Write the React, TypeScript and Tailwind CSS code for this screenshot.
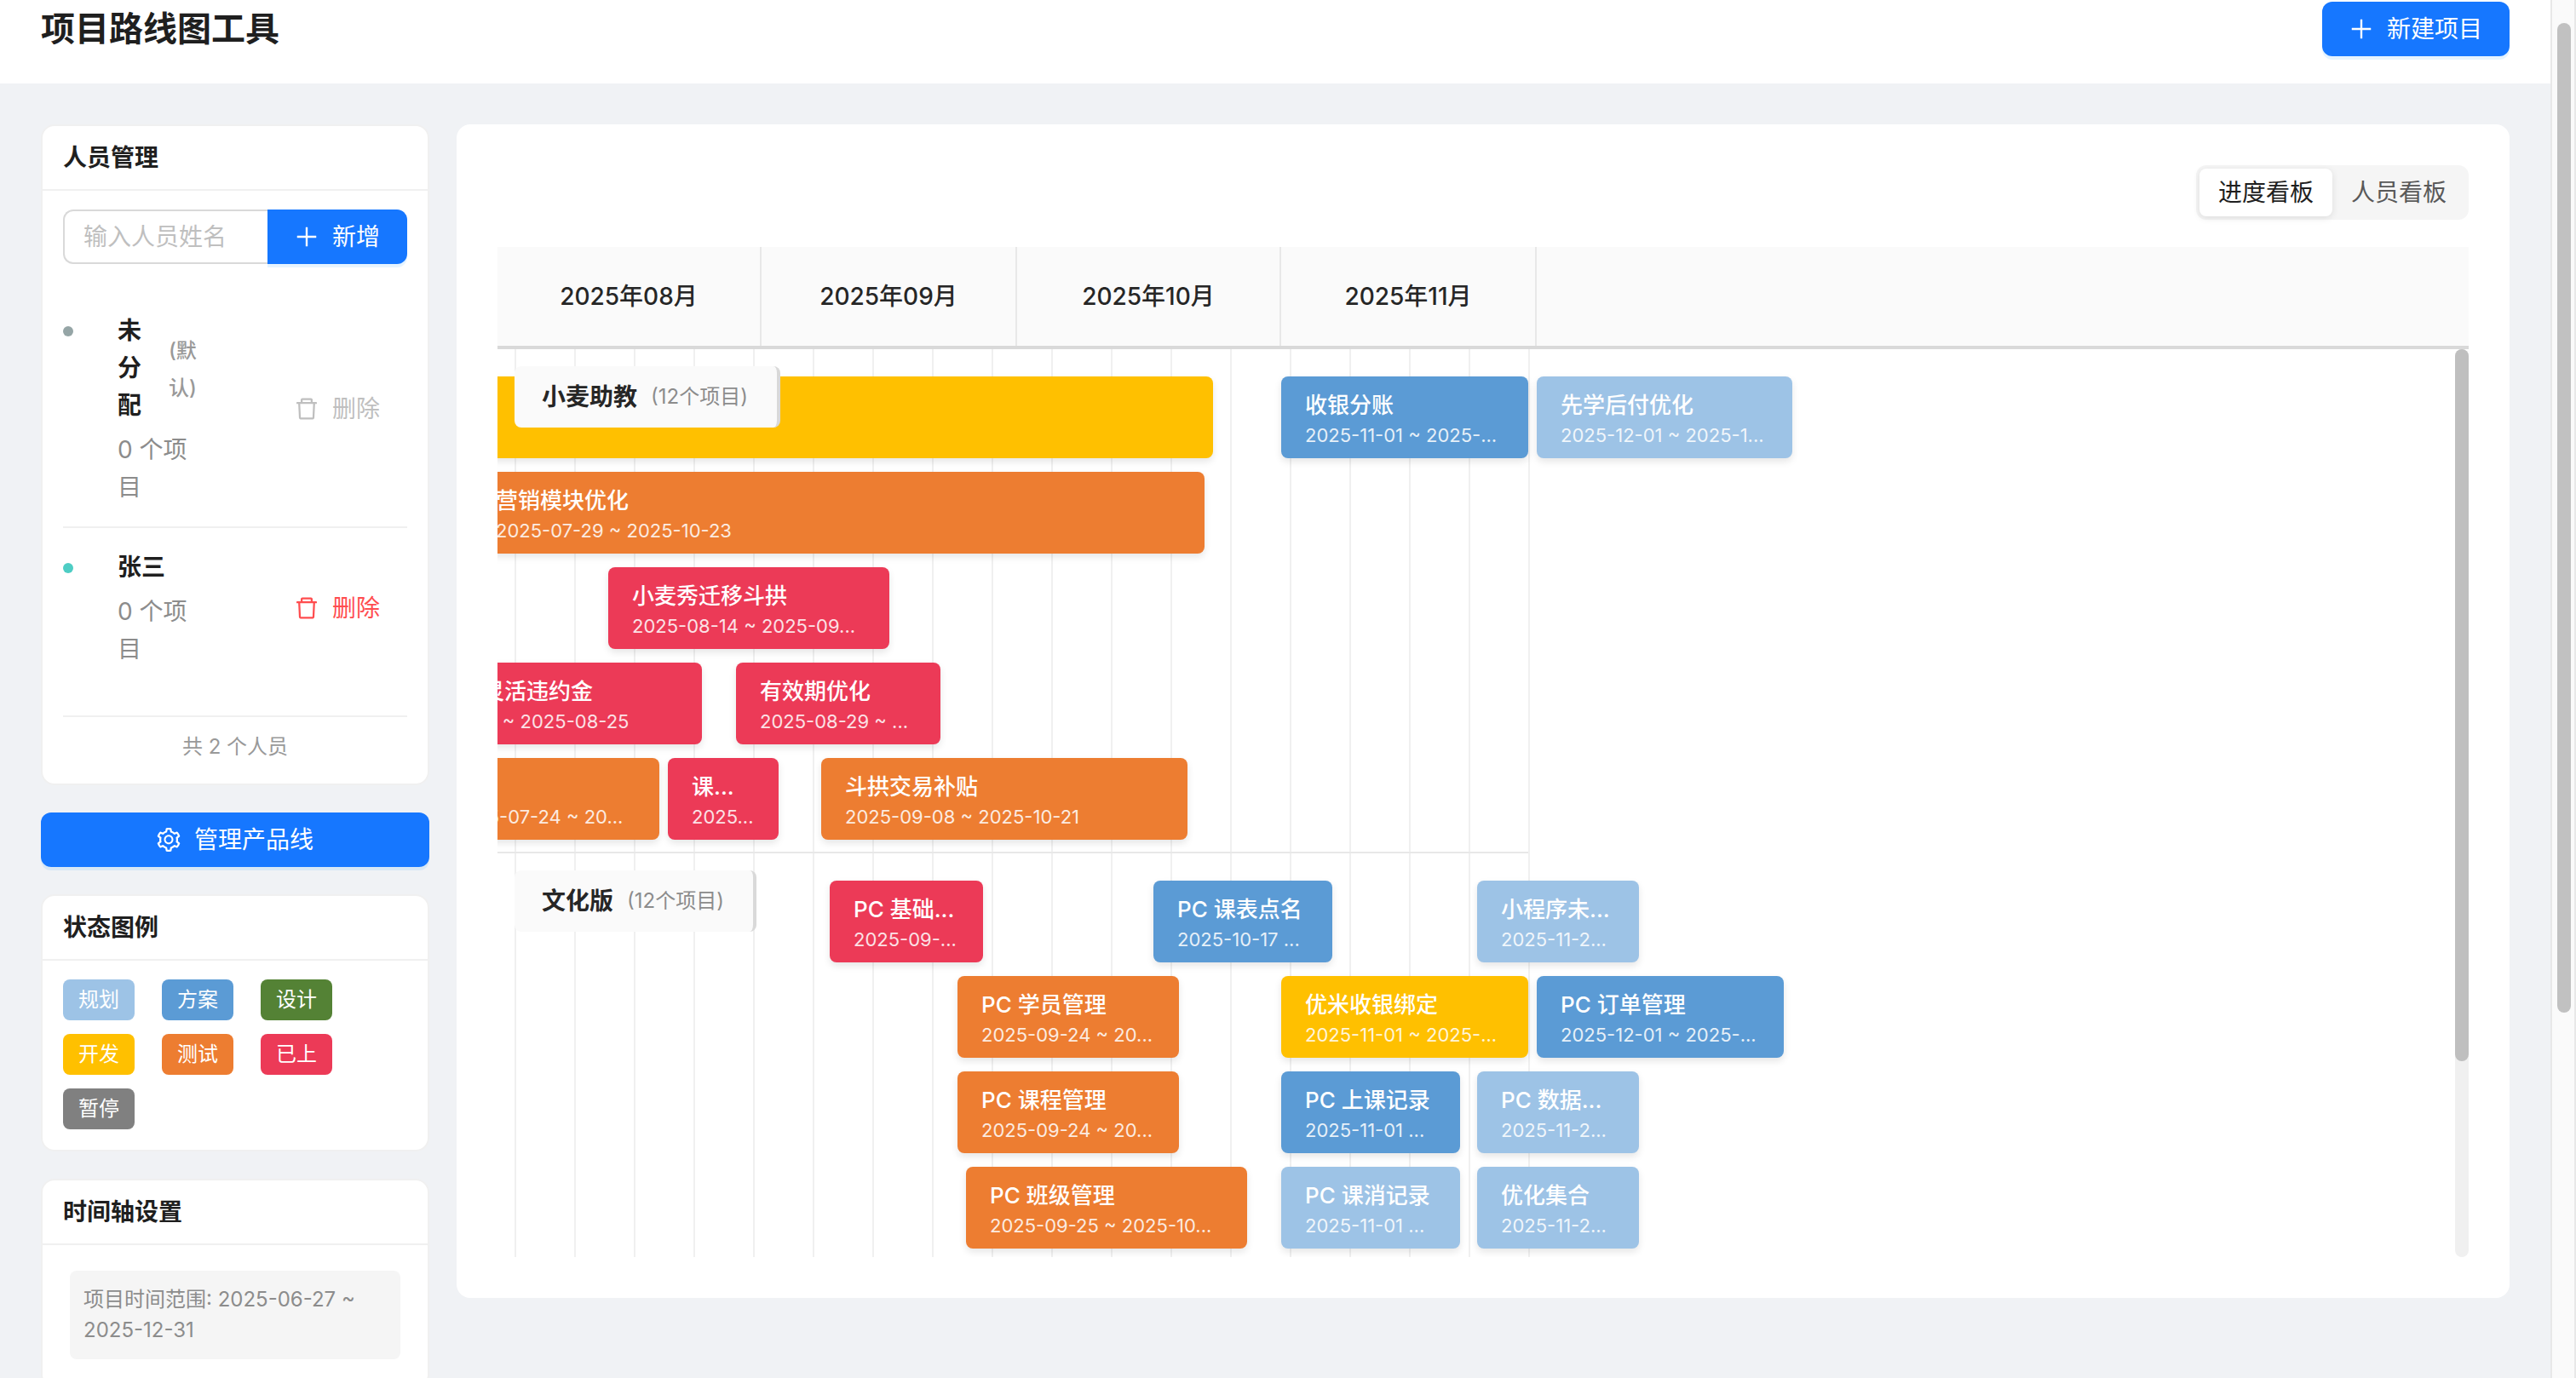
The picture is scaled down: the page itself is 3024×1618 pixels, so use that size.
import { AiOutlineDelete, AiOutlinePlus, AiOutlineSetting } from "react-icons/ai";
import type { ReactNode } from "react";

const PX_PER_DAY = 10;

/* crops the empty margin round the glyphs of the Ant icon set */
const ICON_BOX = "64 64 896 896";

type Status = "plan" | "scheme" | "design" | "dev" | "test" | "online" | "paused";

const STATUS_COLOR: Record<Status, string> = {
  plan: "bg-[#9dc3e6]",
  scheme: "bg-[#5b9bd5]",
  design: "bg-[#548235]",
  dev: "bg-[#ffc000]",
  test: "bg-[#ed7d31]",
  online: "bg-[#ec3a57]",
  paused: "bg-[#808080]",
};

const LEGEND: { status: Status; label: string }[] = [
  { status: "plan", label: "规划" },
  { status: "scheme", label: "方案" },
  { status: "design", label: "设计" },
  { status: "dev", label: "开发" },
  { status: "test", label: "测试" },
  { status: "online", label: "已上" },
  { status: "paused", label: "暂停" },
];

const MONTHS = [
  { label: "2025年08月", days: 31 },
  { label: "2025年09月", days: 30 },
  { label: "2025年10月", days: 31 },
  { label: "2025年11月", days: 30 },
];

/* start and days are counted from 2025-08-01, the first visible day */
type Project = { name: string; range: string; start: number; days: number; status: Status };
type Line = { name: string; count: number; lanes: Project[][] };

const LINES: Line[] = [
  {
    name: "小麦助教",
    count: 12,
    lanes: [
      [
        { name: "", range: "", start: -10, days: 94, status: "dev" },
        { name: "收银分账", range: "2025-11-01 ~ 2025-...", start: 92, days: 29, status: "scheme" },
        { name: "先学后付优化", range: "2025-12-01 ~ 2025-1...", start: 122, days: 30, status: "plan" },
      ],
      [{ name: "营销模块优化", range: "2025-07-29 ~ 2025-10-23", start: -3, days: 86, status: "test" }],
      [{ name: "小麦秀迁移斗拱", range: "2025-08-14 ~ 2025-09...", start: 13, days: 33, status: "online" }],
      [
        { name: "小麦助教灵活违约金", range: "2025-07-17 ~ 2025-08-25", start: -15, days: 39, status: "online" },
        { name: "有效期优化", range: "2025-08-29 ~ ...", start: 28, days: 24, status: "online" },
      ],
      [
        { name: "", range: "2025-07-24 ~ 20...", start: -8, days: 27, status: "test" },
        { name: "课...", range: "2025...", start: 20, days: 13, status: "online" },
        { name: "斗拱交易补贴", range: "2025-09-08 ~ 2025-10-21", start: 38, days: 43, status: "test" },
      ],
    ],
  },
  {
    name: "文化版",
    count: 12,
    lanes: [
      [
        { name: "PC 基础...", range: "2025-09-...", start: 39, days: 18, status: "online" },
        { name: "PC 课表点名", range: "2025-10-17 ...", start: 77, days: 21, status: "scheme" },
        { name: "小程序未...", range: "2025-11-2...", start: 115, days: 19, status: "plan" },
      ],
      [
        { name: "PC 学员管理", range: "2025-09-24 ~ 20...", start: 54, days: 26, status: "test" },
        { name: "优米收银绑定", range: "2025-11-01 ~ 2025-...", start: 92, days: 29, status: "dev" },
        { name: "PC 订单管理", range: "2025-12-01 ~ 2025-...", start: 122, days: 29, status: "scheme" },
      ],
      [
        { name: "PC 课程管理", range: "2025-09-24 ~ 20...", start: 54, days: 26, status: "test" },
        { name: "PC 上课记录", range: "2025-11-01 ...", start: 92, days: 21, status: "scheme" },
        { name: "PC 数据...", range: "2025-11-2...", start: 115, days: 19, status: "plan" },
      ],
      [
        { name: "PC 班级管理", range: "2025-09-25 ~ 2025-10...", start: 55, days: 33, status: "test" },
        { name: "PC 课消记录", range: "2025-11-01 ...", start: 92, days: 21, status: "plan" },
        { name: "优化集合", range: "2025-11-2...", start: 115, days: 19, status: "plan" },
      ],
    ],
  },
];

function Card({ title, children }: { title: string; children: ReactNode }) {
  return (
    <section className="rounded-2xl border-2 border-[#f0f0f0] bg-white">
      <h2 className="-mb-0.5 flex h-[76px] items-center border-b-2 border-[#f0f0f0] px-6 text-[28px] leading-[44px] font-semibold">
        {title}
      </h2>
      <div className="p-6">{children}</div>
    </section>
  );
}

function Person({ name, tag, color, last, disabled }: { name: string; tag?: string; color: string; last?: boolean; disabled?: boolean }) {
  return (
    <li className={last ? "flex items-center py-6" : "flex items-center border-b-2 border-[#f0f0f0] py-6"}>
      <div className="flex flex-1 items-start">
        <span className="flex h-[46px] w-16 items-center">
          <span className={`size-3 rounded-full ${color}`} />
        </span>
        <div className="w-24">
          <h3 className="mb-2 flex items-center gap-8 text-[28px] leading-[44px] font-semibold">
            {tag ? (
              <>
                <span className="w-7">{name}</span>
                <span className="w-9 pt-1 text-2xl leading-[44px] font-medium break-all text-[#999999]">{tag}</span>
              </>
            ) : (
              name
            )}
          </h3>
          <p className="text-[28px] leading-[44px] text-[#8c8c8c]">0 个项目</p>
        </div>
      </div>
      <button
        type="button"
        disabled={disabled}
        className="flex items-center gap-4 px-8 text-[28px] leading-[44px] text-[#ff4d4f] disabled:text-[#bfbfbf]"
      >
        <AiOutlineDelete viewBox={ICON_BOX} />
        删除
      </button>
    </li>
  );
}

function Lane({ projects }: { projects: Project[] }) {
  return (
    <div className="flex h-28 items-start">
      {projects.map((p, i) => {
        const prev = i === 0 ? 0 : projects[i - 1].start + projects[i - 1].days;
        return (
          <article
            key={i}
            className={`h-24 shrink-0 rounded-lg px-7 pt-4 whitespace-nowrap text-white shadow-[0_4px_8px_rgba(0,0,0,0.1)] ${STATUS_COLOR[p.status]}`}
            style={{ marginLeft: (p.start - prev) * PX_PER_DAY, width: p.days * PX_PER_DAY }}
          >
            <h4 className="h-9 text-[26px] leading-9 font-medium">{p.name}</h4>
            <p className="mt-px text-[22px] leading-8 opacity-85 [font-optical-sizing:none]">{p.range}</p>
          </article>
        );
      })}
    </div>
  );
}

function Timeline() {
  return (
    <div>
      <div className="flex h-[120px] border-b-4 border-[#d9d9d9] bg-[#fafafa]">
        {MONTHS.map((m) => (
          <div
            key={m.label}
            className="flex shrink-0 items-center justify-center border-r-2 border-[#e8e8e8] text-[28px] font-medium text-[#262626]"
            style={{ width: m.days * PX_PER_DAY }}
          >
            {m.label}
          </div>
        ))}
      </div>
      <div className="flex h-[1066px]">
        <div className="relative h-full min-w-0 flex-1 overflow-hidden">
          <div className="absolute inset-y-0 left-5 flex gap-[68px]" aria-hidden="true">
            {Array.from({ length: 18 }, (_, i) => (
              <div key={i} className="w-0.5 bg-[#f0f0f0]" />
            ))}
          </div>
          {LINES.map((line) => (
            <section key={line.name} className="relative pt-8">
              {line.lanes.map((lane, i) => (
                <Lane key={i} projects={lane} />
              ))}
              <div className="-mt-0.5 h-0.5 w-[1210px] bg-[#e8e8e8]" />
              <div className="absolute top-5 left-5 flex h-[72px] items-center gap-4 rounded-lg border-r-4 border-[#d9d9d9] bg-[#fafafa] pr-[34px] pl-8 whitespace-nowrap">
                <h3 className="text-[28px] font-semibold text-[#262626]">{line.name}</h3>
                <span className="text-2xl text-[#8c8c8c]">({line.count}个项目)</span>
              </div>
            </section>
          ))}
        </div>
        <div className="w-4 rounded-lg bg-[#f0f0f0]">
          <div className="h-[836px] rounded-lg bg-[#bfbfbf]" />
        </div>
      </div>
    </div>
  );
}

export default function App() {
  return (
    <div className="flex h-screen overflow-hidden bg-[#f0f2f5] font-[Inter,'Noto_Sans_CJK_SC',sans-serif] text-[#1f1f1f]">
      <div className="min-w-0 flex-1">
        <header className="flex h-[98px] items-center justify-between bg-white px-12 pb-[30px]">
          <h1 className="text-[40px] leading-[64px] font-semibold">项目路线图工具</h1>
          <button
            type="button"
            className="flex h-16 items-center gap-4 rounded-xl bg-[#1677ff] px-8 text-[28px] text-white shadow-[0_4px_0_rgba(5,145,255,0.1)]"
          >
            <AiOutlinePlus viewBox={ICON_BOX} />
            新建项目
          </button>
        </header>

        <div className="flex items-start gap-8 p-12">
          <aside className="flex w-[456px] shrink-0 flex-col gap-8">
            <Card title="人员管理">
              <form className="flex" onSubmit={(e) => e.preventDefault()}>
                <input
                  aria-label="人员姓名"
                  placeholder="输入人员姓名"
                  className="h-16 w-0 flex-1 rounded-l-xl border-2 border-r-0 border-[#d9d9d9] px-[22px] text-[28px] placeholder:text-[#bfbfbf]"
                />
                <button
                  type="submit"
                  className="flex h-16 items-center gap-4 rounded-r-xl bg-[#1677ff] px-8 text-[28px] text-white shadow-[0_4px_0_rgba(5,145,255,0.1)]"
                >
                  <AiOutlinePlus viewBox={ICON_BOX} />
                  新增
                </button>
              </form>
              <ul className="my-8">
                <Person name="未分配" tag="(默认)" color="bg-[#95a5a6]" disabled />
                <Person name="张三" color="bg-[#4ecdc4]" last />
              </ul>
              <p className="border-t-2 border-[#f0f0f0] pt-4 text-center text-2xl leading-[38px] text-[#999999]">共 2 个人员</p>
            </Card>

            <button
              type="button"
              className="flex h-16 items-center justify-center gap-4 rounded-xl bg-[#1677ff] text-[28px] text-white shadow-[0_4px_0_rgba(5,145,255,0.1)]"
            >
              <AiOutlineSetting viewBox={ICON_BOX} />
              管理产品线
            </button>

            <Card title="状态图例">
              <ul className="flex flex-wrap gap-x-8 gap-y-4">
                {LEGEND.map((l) => (
                  <li
                    key={l.status}
                    className={`flex h-12 w-[84px] items-center justify-center rounded-lg text-2xl text-white ${STATUS_COLOR[l.status]}`}
                  >
                    {l.label}
                  </li>
                ))}
              </ul>
            </Card>

            <Card title="时间轴设置">
              <div className="p-2">
                <p className="rounded-lg bg-[#f5f5f5] p-4 text-2xl leading-9 text-[#8c8c8c]">项目时间范围: 2025-06-27 ~ 2025-12-31</p>
              </div>
            </Card>
          </aside>

          <main className="min-w-0 flex-1 rounded-2xl bg-white p-12">
            <div className="mb-8 flex justify-end">
              <div className="flex rounded-xl bg-[#f5f5f5] p-1 text-[28px]">
                <button
                  type="button"
                  aria-pressed="true"
                  className="h-14 rounded-lg bg-white px-[22px] shadow-[0_2px_8px_rgba(0,0,0,0.1)]"
                >
                  进度看板
                </button>
                <button type="button" aria-pressed="false" className="h-14 px-[22px] text-[#595959]">
                  人员看板
                </button>
              </div>
            </div>
            <Timeline />
          </main>
        </div>
      </div>

      <div className="w-[30px] shrink-0 border-x-2 border-[#e8e8e8] bg-[#fafafa] pt-[27px] pr-1 pl-1.5" aria-hidden="true">
        <div className="h-[1162px] w-4 rounded-full bg-[#c1c1c1]" />
      </div>
    </div>
  );
}
